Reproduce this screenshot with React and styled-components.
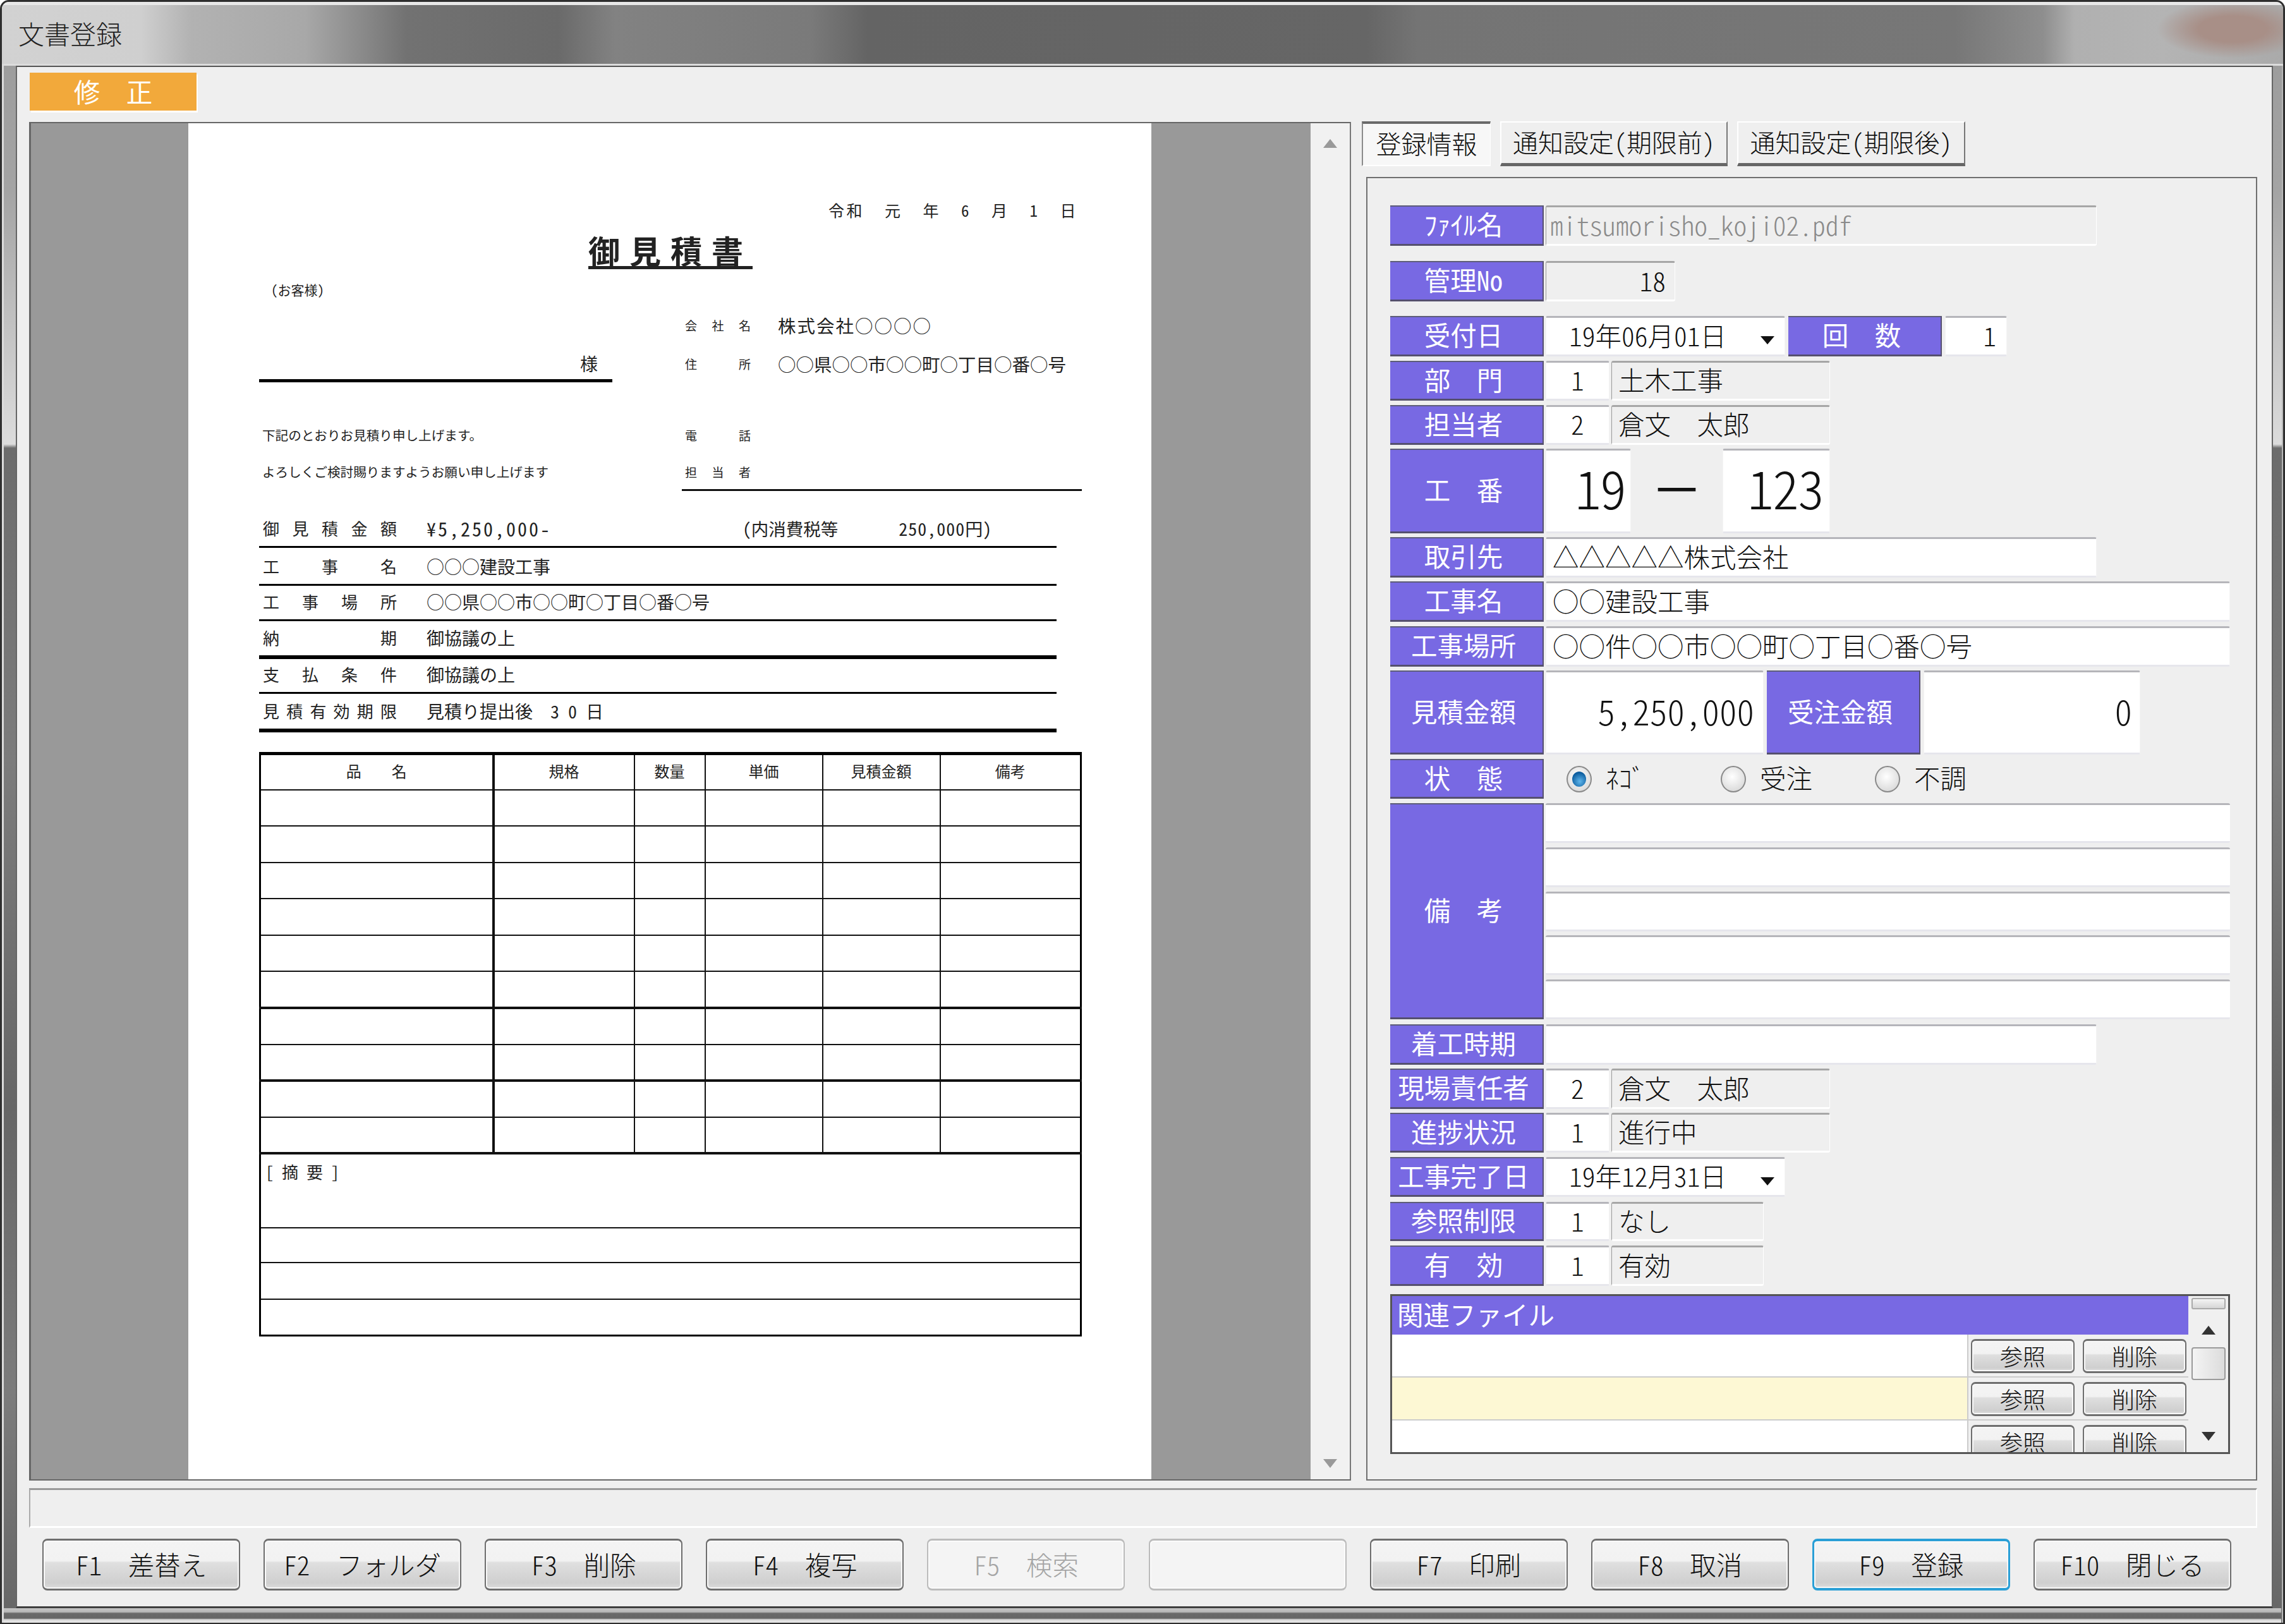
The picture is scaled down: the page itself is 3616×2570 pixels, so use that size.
import React from "react";
import styled, { createGlobalStyle } from "styled-components";

const purple = "#7869e3";
const jp = `"Noto Sans CJK JP", sans-serif`;

const Global = createGlobalStyle`
  html, body {
    margin: 0;
    padding: 0;
    background: #fff;
  }
  body {
    font-family: ${jp};
    font-feature-settings: "hwid" 1;
    font-weight: 300;
    color: #111;
  }
  * { box-sizing: border-box; }
`;

const Window = styled.div`
  width: 3616px;
  height: 2570px;
  display: flex;
  flex-direction: column;
  border-radius: 14px 14px 0 0;
  overflow: hidden;
  border: 3px solid #2e2e2e;
  border-bottom-width: 2px;
  box-shadow: inset 3px 0 0 #dcdcdc, inset -2px 0 0 #b8b8b8;
  background: linear-gradient(180deg, #9a9a9a 0, #a4a4a4 300px, #dcdcdc 700px, #6c6c6c 706px, #7c7c7c 1200px,
    #666 1750px, #7c7c7c 2200px, #666 100%);
`;

const TitleBar = styled.div`
  height: 101px;
  flex: none;
  display: flex;
  align-items: center;
  padding: 0 0 6px 26px;
  border-top: 5px solid #e8e8e8;
  border-bottom: 3px solid #dcdcdc;
  font-size: 41px;
  color: #222;
  background:
    radial-gradient(ellipse 120px 46px at 3530px 38px, #a88f87 45%, rgba(168, 143, 135, 0) 100%),
    linear-gradient(90deg, #d2d2d2 0, #cfcfcf 220px, #b2b2b2 300px, #a8a8a8 480px, #8a8a8a 570px, #727272 640px,
      #6a6a6a 880px, #828282 970px, #7a7a7a 1280px, #646464 1370px, #666 2160px, #747474 2240px, #777 3090px,
      #8e8e8e 3230px, #b0b0b0 3280px, #b4b4b4 3420px, #aaa 100%);
`;

const Client = styled.div`
  height: 2441px;
  flex: none;
  margin: 0 16px 0 22px;
  display: flex;
  flex-direction: column;
  padding: 9px 23px 0 19px;
  background: #efefef;
  border-top: 2px solid #555;
  border-left: 2px solid #666;
  border-right: 2px solid #666;
  border-bottom: 3px solid #3e3e3e;
`;

const FrameBottom = styled.div`
  flex: 1;
  margin: 0 3px;
  background: linear-gradient(180deg, #c4c4c4 0, #b8b8b8 6px, #6a6a6a 8px, #666 16px, #d8d8d8 18px, #e8e8e8 100%);
`;

const Mode = styled.div`
  width: 264px;
  height: 60px;
  margin-left: 1px;
  flex: none;
  display: flex;
  justify-content: center;
  align-items: center;
  padding-bottom: 3px;
  background: #f2a93b;
  color: #fff;
  font-size: 41.5px;
  font-weight: 400;
  white-space: pre;
  box-shadow: 2px 3px 0 #fff;
`;

const Main = styled.div`
  height: 2150px;
  margin-top: 18px;
  flex: none;
  display: flex;
`;

const Viewer = styled.div`
  width: 2092px;
  flex: none;
  display: flex;
  border-top: 2px solid #666;
  border-bottom: 2px solid #666;
  border-left: 3px solid #666;
  border-right: 2px solid #777;
`;

const PageArea = styled.div`
  flex: 1;
  background: #999;
  display: flex;
  justify-content: center;
  padding-right: 3px;
`;

const Page = styled.div`
  width: 1524px;
  background: #fff;
  padding: 117px 110px 0 112px;
  color: #222;
  font-weight: 400;
`;

const ViewerScroll = styled.div`
  width: 62px;
  flex: none;
  display: flex;
  flex-direction: column;
  justify-content: space-between;
  align-items: center;
  padding: 25px 0 18px;
  background: #f1f1f1;
`;

const DateLine = styled.div`
  height: 40px;
  padding-right: 6px;
  text-align: right;
  font-size: 25px;
  letter-spacing: 3.5px;
  line-height: 40px;
  white-space: pre;
`;

const DocTitle = styled.div`
  margin: 13px 0 2px 0;
  height: 60px;
  text-align: center;
  font-size: 50px;
  line-height: 60px;
  font-weight: 700;
  letter-spacing: 15px;
  text-decoration: underline;
  text-underline-offset: 4px;
`;

const Customer = styled.div`
  margin: 21px 0 0 19px;
  height: 24px;
  font-size: 21px;
  line-height: 24px;
`;

const HeadBlock = styled.div`
  display: flex;
`;

const HeadLeft = styled.div`
  width: 559px;
  flex: none;
`;

const Addressee = styled.div`
  margin-top: 87px;
  height: 48px;
  padding-right: 23px;
  text-align: right;
  font-size: 28px;
  line-height: 36px;
  border-bottom: 5px solid #000;
`;

const Note = styled.div`
  margin: ${(p) => p.$mt}px 0 0 5px;
  height: 30px;
  font-size: 20.6px;
  line-height: 30px;
  white-space: nowrap;
`;

const HeadRight = styled.div`
  width: 633px;
  margin-left: 110px;
  flex: none;
`;

const CompanyRow = styled.div`
  margin-top: ${(p) => p.$mt}px;
  height: 30px;
  padding-left: 5px;
  display: flex;
  align-items: center;
  font-size: 28.5px;
  white-space: nowrap;
`;

const CompanyLabel = styled.span`
  width: 104px;
  margin-right: 43px;
  font-size: 19px;
  text-align: justify;
  text-align-last: justify;
`;

const CompanyName = styled.span`
  letter-spacing: 2px;
`;

const CompanyRule = styled.div`
  margin-top: 13px;
  height: 3px;
  background: #111;
`;

const InfoRow = styled.div`
  width: 1262px;
  height: ${(p) => p.$h}px;
  display: flex;
  align-items: flex-end;
  padding: 0 0 11px 6px;
  border-bottom: ${(p) => p.$line}px solid #000;
  font-size: 28px;
  line-height: 34px;
  white-space: pre;
`;

const InfoLabel = styled.span`
  width: 212px;
  margin-right: 47px;
  font-size: 26px;
  text-align: justify;
  text-align-last: justify;
`;

const Amount = styled.span`
  font-size: 30px;
  letter-spacing: 3px;
`;

const InfoTax = styled.span`
  margin-left: 302px;
  font-size: 27.5px;
`;

const TaxAmount = styled.span`
  margin-left: 96px;
  font-size: 28px;
  letter-spacing: 1px;
`;

const Estimate = styled.table`
  width: 1299px;
  margin-top: 31px;
  border-collapse: collapse;
  table-layout: fixed;
  border: 3px solid #000;
  border-top-width: 5px;
`;

const EstHead = styled.td`
  height: 57px;
  padding: 0 0 4px;
  text-align: center;
  font-size: 24px;
  white-space: pre;
  border: 2px solid #111;
  border-right-width: ${(p) => (p.$thick ? 4 : 2)}px;
`;

const EstCell = styled.td`
  height: 57.6px;
  padding: 0;
  border: 2px solid #111;
  border-right-width: ${(p) => (p.$thick ? 4 : 2)}px;
  border-bottom-width: ${(p) => (p.$strong ? 4 : 2)}px;
`;

const NoteCell = styled.td`
  height: ${(p) => p.$h}px;
  padding: ${(p) => (p.$top ? "9px 0 0 7px" : 0)};
  vertical-align: top;
  font-size: 26px;
  line-height: 36px;
  border: 2px solid #111;
`;

const Pane = styled.div`
  flex: 1;
  display: flex;
  flex-direction: column;
  margin-left: 17px;
`;

const Tabs = styled.div`
  height: 71px;
  flex: none;
  display: flex;
  margin-top: -1px;
`;

const Tab = styled.div`
  width: ${(p) => p.$w}px;
  margin-right: 15px;
  display: flex;
  justify-content: center;
  align-items: center;
  padding-bottom: 5px;
  font-size: 40px;
  white-space: nowrap;
  background: ${(p) => (p.$active ? "#f7f7f7" : "#efefef")};
  border-style: solid;
  border-width: ${(p) => (p.$active ? "4px 1px 2px 2px" : "2px 2px 5px 2px")};
  border-color: ${(p) => (p.$active ? "#6a6a6a #fff #fff #8a8a8a" : "#fff #777 #666 #fff")};
`;

const Group = styled.div`
  flex: 1;
  margin: 17px 0 0 7px;
  padding: 43px 36px 0;
  border: 2px solid #6f6f6f;
`;

const Row = styled.div`
  height: ${(p) => p.$h || 64}px;
  margin-top: ${(p) => p.$mt ?? 7}px;
  display: flex;
`;

const Label = styled.div`
  width: 243px;
  flex: none;
  display: flex;
  justify-content: center;
  align-items: center;
  padding: 0 9px 5px 0;
  background: ${purple};
  color: #fff;
  font-size: 41.5px;
  font-weight: 400;
  white-space: pre;
  border-top: 2px solid #5d5d78;
  border-right: 2px solid #55506f;
  border-bottom: 3px solid #55506f;
  margin-left: ${(p) => p.$ml || 0}px;
`;

const Field = styled.div`
  width: ${(p) => p.$w}px;
  flex: none;
  margin-left: ${(p) => p.$ml ?? 3}px;
  display: flex;
  align-items: center;
  justify-content: ${(p) => p.$align || "flex-start"};
  padding: ${(p) => p.$pad || "0 10px"};
  padding-bottom: ${(p) => p.$lift || 5}px;
  font-size: ${(p) => p.$size || 41.5}px;
  color: ${(p) => p.$color || "#111"};
  white-space: pre;
  background: ${(p) => (p.$ro ? "#efefef" : "#fff")};
  border-radius: 3px;
  border-style: solid;
  border-width: 3px 1px 3px 1px;
  border-color: ${(p) => (p.$ro ? "#a6a6a6 #fff #fff #999" : "#b5b5ba #f4f4f4 #e6e6ec #f4f4f4")};
`;

const Drop = styled.span`
  width: 0;
  height: 0;
  margin-left: auto;
  margin-right: 2px;
  margin-top: 18px;
  border-left: 11px solid transparent;
  border-right: 11px solid transparent;
  border-top: 13px solid #111;
`;

const Dash = styled.div`
  width: 145px;
  flex: none;
  display: flex;
  justify-content: center;
  align-items: center;
  padding-bottom: 12px;
  font-size: 66px;
  -webkit-text-stroke: 3px #111;
`;

const Bignum = styled(Field)`
  letter-spacing: -2px;
`;

const RadioGroup = styled.div`
  display: flex;
  align-items: center;
  padding-left: 36px;
`;

const RadioItem = styled.label`
  width: 244px;
  display: flex;
  align-items: center;
  gap: 22px;
  font-size: 41.5px;
`;

const RadioText = styled.span`
  padding-bottom: 6px;
`;

const RadioDot = styled.span`
  width: 40px;
  height: 42px;
  flex: none;
  display: flex;
  justify-content: center;
  align-items: center;
  border-radius: 50%;
  border: 2px solid #8a8a8a;
  background: radial-gradient(circle at 45% 40%, #fff, #d0d0d0);
  &::after {
    content: "";
    display: ${(p) => (p.$on ? "block" : "none")};
    width: 22px;
    height: 24px;
    border-radius: 50%;
    background: radial-gradient(circle at 55% 65%, #5fb6ec, #0b5c9e 70%);
  }
`;

const Stack = styled.div`
  width: 1083px;
  flex: none;
  margin-left: 3px;
  display: flex;
  flex-direction: column;
  justify-content: space-between;
`;

const StackField = styled.div`
  height: 63px;
  background: #fff;
  border-radius: 3px;
  border-top: 3px solid #b5b5ba;
  border-bottom: 3px solid #e6e6ec;
`;

const Related = styled.div`
  height: 253px;
  margin-top: 13px;
  width: 1329px;
  display: flex;
  overflow: hidden;
  background: #f0f0f0;
  border: 3px solid #555;
`;

const RelatedBody = styled.div`
  width: 1260px;
  flex: none;
  display: flex;
  flex-direction: column;
`;

const RelatedHead = styled.div`
  height: 61px;
  flex: none;
  display: flex;
  align-items: center;
  padding: 0 0 5px 8px;
  background: ${purple};
  color: #fff;
  font-size: 41.5px;
  font-weight: 400;
`;

const RelatedRow = styled.div`
  height: 68px;
  flex: none;
  display: flex;
  border-bottom: 2px solid #ccc;
  background: ${(p) => (p.$tint ? "#fdf8d4" : "#fff")};
`;

const RelatedName = styled.div`
  width: 912px;
  flex: none;
  border-right: 2px solid #ccc;
`;

const RelatedActions = styled.div`
  flex: 1;
  display: flex;
  gap: 13px;
  padding: 7px 0 0 4px;
  background: #f0f0f0;
`;

const Push = styled.button`
  display: flex;
  justify-content: center;
  align-items: center;
  padding: 0 0 3px;
  font-family: ${jp};
  font-feature-settings: "hwid" 1;
  font-weight: 300;
  white-space: pre;
  border-style: solid;
  border-color: ${(p) => (p.$focus ? "#2a9fd6" : p.disabled ? "#bbb" : "#6e6e6e")};
  border-width: ${(p) => (p.$focus ? "4px 3px" : "3px 2px")};
  color: ${(p) => (p.disabled ? "#a5a5a5" : "#111")};
  background: ${(p) =>
    p.disabled
      ? "#f4f4f4"
      : "linear-gradient(180deg, #f4f4f4 0, #f2f2f2 42%, #dfdfdf 46%, #cfcfcf 88%, #dcdcdc 100%)"};
  box-shadow: inset 0 0 0 2px ${(p) => (p.disabled ? "#fbfbfb" : "#f8f8f8")};
`;

const RowButton = styled(Push)`
  width: 164px;
  height: 54px;
  flex: none;
  border-radius: 7px;
  font-size: 36px;
`;

const ListScroll = styled.div`
  flex: 1;
  display: flex;
  flex-direction: column;
  align-items: center;
  padding: 3px 3px 0;
`;

const ThumbSmall = styled.div`
  width: 54px;
  height: 18px;
  border: 2px solid #aaa;
  border-radius: 3px;
  background: linear-gradient(180deg, #f4f4f4, #d6d6d6);
`;

const Thumb = styled.div`
  width: 54px;
  height: 52px;
  margin-top: 20px;
  border: 2px solid #9a9a9a;
  border-radius: 4px;
  background: linear-gradient(90deg, #f4f4f4, #dcdcdc);
`;

const ArrowWrap = styled.div`
  margin-top: ${(p) => p.$mt || 0}px;
  line-height: 0;
`;

const StatusBar = styled.div`
  height: 63px;
  margin-top: 12px;
  flex: none;
  border-top: 3px solid #999;
  border-left: 2px solid #aaa;
  border-bottom: 3px solid #fff;
  border-right: 2px solid #fff;
`;

const Functions = styled.div`
  margin: 17px 41px 0 21px;
  display: flex;
  justify-content: space-between;
`;

const FnButton = styled(Push)`
  width: 313px;
  height: 82px;
  border-radius: 8px;
  font-size: 41.5px;
`;

function Arrow({ up, color }) {
  return (
    <svg width="24" height="14" viewBox="0 0 24 14">
      <path d={up ? "M12 0 L23 14 L1 14 Z" : "M1 0 L23 0 L12 14 Z"} fill={color} />
    </svg>
  );
}

const estRows = [0, 1, 2, 3, 4, 5, 6, 7, 8, 9];
const strongRows = [5, 7, 9];
const estHeads = ["品    名", "規格", "数量", "単価", "見積金額", "備考"];
const fnKeys = [
  { text: "F1  差替え" },
  { text: "F2  フォルダ" },
  { text: "F3  削除" },
  { text: "F4  複写" },
  { text: "F5  検索", disabled: true },
  { text: "", disabled: true },
  { text: "F7  印刷" },
  { text: "F8  取消" },
  { text: "F9  登録", focus: true },
  { text: "F10  閉じる" },
];

function DocumentPage() {
  return (
    <Page>
      <DateLine>令和  元  年  6  月  1  日</DateLine>
      <DocTitle>御見積書</DocTitle>
      <Customer>(お客様)</Customer>
      <HeadBlock>
        <HeadLeft>
          <Addressee>様</Addressee>
          <Note $mt={68}>下記のとおりお見積り申し上げます。</Note>
          <Note $mt={28}>よろしくご検討賜りますようお願い申し上げます</Note>
        </HeadLeft>
        <HeadRight>
          <CompanyRow $mt={29}>
            <CompanyLabel>会社名</CompanyLabel>
            <CompanyName>株式会社○○○○</CompanyName>
          </CompanyRow>
          <CompanyRow $mt={31}>
            <CompanyLabel>住所</CompanyLabel>○○県○○市○○町○丁目○番○号
          </CompanyRow>
          <CompanyRow $mt={83}>
            <CompanyLabel>電話</CompanyLabel>
          </CompanyRow>
          <CompanyRow $mt={28}>
            <CompanyLabel>担当者</CompanyLabel>
          </CompanyRow>
          <CompanyRule />
        </HeadRight>
      </HeadBlock>
      <InfoRow $h={90} $line={3}>
        <InfoLabel>御見積金額</InfoLabel>
        <Amount>¥5,250,000-</Amount>
        <InfoTax>(内消費税等</InfoTax>
        <TaxAmount>250,000</TaxAmount>円)
      </InfoRow>
      <InfoRow $h={60} $line={3}>
        <InfoLabel>工事名</InfoLabel>○○○建設工事
      </InfoRow>
      <InfoRow $h={56} $line={3}>
        <InfoLabel>工事場所</InfoLabel>○○県○○市○○町○丁目○番○号
      </InfoRow>
      <InfoRow $h={60} $line={6}>
        <InfoLabel>納期</InfoLabel>御協議の上
      </InfoRow>
      <InfoRow $h={55} $line={3}>
        <InfoLabel>支払条件</InfoLabel>御協議の上
      </InfoRow>
      <InfoRow $h={61} $line={6}>
        <InfoLabel>見積有効期限</InfoLabel>見積り提出後  3 0 日
      </InfoRow>
      <Estimate>
        <colgroup>
          <col style={{ width: 369 }} />
          <col style={{ width: 223 }} />
          <col style={{ width: 112 }} />
          <col style={{ width: 186 }} />
          <col style={{ width: 186 }} />
          <col style={{ width: 223 }} />
        </colgroup>
        <tbody>
          <tr>
            {estHeads.map((h, i) => (
              <EstHead key={h} $thick={i === 0}>
                {h}
              </EstHead>
            ))}
          </tr>
          {estRows.map((r) => (
            <tr key={r}>
              {estHeads.map((h, i) => (
                <EstCell key={h} $thick={i === 0} $strong={strongRows.includes(r)} />
              ))}
            </tr>
          ))}
          <tr>
            <NoteCell colSpan={6} $h={118} $top>
              [ 摘 要 ]
            </NoteCell>
          </tr>
          <tr>
            <NoteCell colSpan={6} $h={55} />
          </tr>
          <tr>
            <NoteCell colSpan={6} $h={58} />
          </tr>
          <tr>
            <NoteCell colSpan={6} $h={57} />
          </tr>
        </tbody>
      </Estimate>
    </Page>
  );
}

function CodeRow({ label, mt, h, code, name, nameWidth }) {
  return (
    <Row $mt={mt} $h={h}>
      <Label>{label}</Label>
      <Field $w={101} $align="center">
        {code}
      </Field>
      <Field $w={nameWidth} $ro>
        {name}
      </Field>
    </Row>
  );
}

function RelatedLine({ tint }) {
  return (
    <RelatedRow $tint={tint}>
      <RelatedName />
      <RelatedActions>
        <RowButton>参照</RowButton>
        <RowButton>削除</RowButton>
      </RelatedActions>
    </RelatedRow>
  );
}

function FormPane() {
  return (
    <Pane>
      <Tabs>
        <Tab $w={204} $active>
          登録情報
        </Tab>
        <Tab $w={360}>通知設定(期限前)</Tab>
        <Tab $w={361}>通知設定(期限後)</Tab>
      </Tabs>
      <Group>
        <Row $mt={0}>
          <Label>ﾌｧｲﾙ名</Label>
          <Field $w={872} $ro $color="#8a8a8a" $pad="0 0 0 6px">
            mitsumorisho_koji02.pdf
          </Field>
        </Row>
        <Row $mt={24}>
          <Label>管理No</Label>
          <Field $w={205} $ro $align="flex-end" $pad="0 14px 0 0">
            18
          </Field>
        </Row>
        <Row $mt={23}>
          <Label>受付日</Label>
          <Field $w={379} $pad="0 14px 0 36px">
            19年06月01日
            <Drop />
          </Field>
          <Label $ml={5}>回  数</Label>
          <Field $w={98} $ml={5} $align="flex-end" $pad="0 16px 0 0">
            1
          </Field>
        </Row>
        <CodeRow label="部  門" mt={7} h={63} code="1" name="土木工事" nameWidth={346} />
        <CodeRow label="担当者" mt={7} h={63} code="2" name="倉文  太郎" nameWidth={346} />
        <Row $h={134} $mt={6}>
          <Label>工  番</Label>
          <Bignum $w={135} $size={84} $align="flex-end" $pad="0 8px 0 0" $lift={16}>
            19
          </Bignum>
          <Dash>―</Dash>
          <Bignum $w={170} $ml={0} $size={84} $align="flex-end" $pad="0 10px 0 0" $lift={16}>
            123
          </Bignum>
        </Row>
        <Row $mt={6}>
          <Label>取引先</Label>
          <Field $w={872}>△△△△△株式会社</Field>
        </Row>
        <Row $mt={6}>
          <Label>工事名</Label>
          <Field $w={1083}>○○建設工事</Field>
        </Row>
        <Row>
          <Label>工事場所</Label>
          <Field $w={1083}>○○件○○市○○町○丁目○番○号</Field>
        </Row>
        <Row $h={133} $mt={6}>
          <Label>見積金額</Label>
          <Field $w={345} $size={55} $align="flex-end" $pad="0 14px 0 0" $lift={8}>
            5,250,000
          </Field>
          <Label $ml={5}>受注金額</Label>
          <Field $w={343} $ml={5} $size={55} $align="flex-end" $pad="0 12px 0 0" $lift={8}>
            0
          </Field>
        </Row>
        <Row $h={63}>
          <Label>状  態</Label>
          <RadioGroup>
            <RadioItem>
              <RadioDot $on />
              <RadioText>ﾈｺ&zwnj;ﾞ</RadioText>
            </RadioItem>
            <RadioItem>
              <RadioDot />
              <RadioText>受注</RadioText>
            </RadioItem>
            <RadioItem>
              <RadioDot />
              <RadioText>不調</RadioText>
            </RadioItem>
          </RadioGroup>
        </Row>
        <Row $h={342}>
          <Label>備  考</Label>
          <Stack>
            <StackField />
            <StackField />
            <StackField />
            <StackField />
            <StackField />
          </Stack>
        </Row>
        <Row $mt={8}>
          <Label>着工時期</Label>
          <Field $w={872} />
        </Row>
        <CodeRow label="現場責任者" mt={6} h={64} code="2" name="倉文  太郎" nameWidth={346} />
        <CodeRow label="進捗状況" mt={6} h={63} code="1" name="進行中" nameWidth={346} />
        <Row $h={63}>
          <Label>工事完了日</Label>
          <Field $w={379} $pad="0 14px 0 36px">
            19年12月31日
            <Drop />
          </Field>
        </Row>
        <CodeRow label="参照制限" mt={8} h={62} code="1" name="なし" nameWidth={241} />
        <CodeRow label="有  効" mt={7} h={64} code="1" name="有効" nameWidth={241} />
        <Related>
          <RelatedBody>
            <RelatedHead>関連ファイル</RelatedHead>
            <RelatedLine />
            <RelatedLine tint />
            <RelatedLine />
          </RelatedBody>
          <ListScroll>
            <ThumbSmall />
            <ArrowWrap $mt={26}>
              <Arrow up color="#333" />
            </ArrowWrap>
            <Thumb />
            <ArrowWrap $mt={82}>
              <Arrow color="#333" />
            </ArrowWrap>
          </ListScroll>
        </Related>
      </Group>
    </Pane>
  );
}

export default function App() {
  return (
    <>
      <Global />
      <Window>
        <TitleBar>文書登録</TitleBar>
        <Client>
          <Mode>修  正</Mode>
          <Main>
            <Viewer>
              <PageArea>
                <DocumentPage />
              </PageArea>
              <ViewerScroll>
                <Arrow up color="#999" />
                <Arrow color="#999" />
              </ViewerScroll>
            </Viewer>
            <FormPane />
          </Main>
          <StatusBar />
          <Functions>
            {fnKeys.map((k, i) => (
              <FnButton key={i} disabled={k.disabled} $focus={k.focus}>
                {k.text}
              </FnButton>
            ))}
          </Functions>
        </Client>
        <FrameBottom />
      </Window>
    </>
  );
}
